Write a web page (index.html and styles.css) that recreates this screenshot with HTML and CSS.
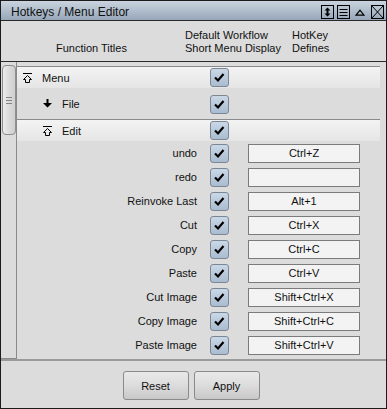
FILE: index.html
```html
<!DOCTYPE html>
<html>
<head>
<meta charset="utf-8">
<link rel="stylesheet" href="styles.css">
</head>
<body>
<div class="window">
  <div class="titlebar">
    <span class="title">Hotkeys / Menu Editor</span>
    <div class="tb-icons">
      <svg class="tb-box" width="13" height="14" viewBox="0 0 13 14"><rect x="0.5" y="0.5" width="12" height="13" fill="none" stroke="#000"/><path d="M6.5 4V10" stroke="#000" stroke-width="2"/><path d="M3.5 5.5L6.5 2.5L9.5 5.5Z M3.5 8.5L6.5 11.5L9.5 8.5Z" fill="#000"/></svg>
      <svg class="tb-box tb-list" width="13" height="14" viewBox="0 0 13 14"><rect x="0.5" y="0.5" width="12" height="13" fill="none" stroke="#000"/><path d="M2.5 4.5H10.5M2.5 7.5H10.5M2.5 10.5H10.5" stroke="#000"/></svg>
      <svg class="tb-tri" width="10" height="7" viewBox="0 0 10 7"><path d="M1 6.2L5 1.2L9 6.2Z" fill="none" stroke="#000" stroke-width="1.3" stroke-linejoin="miter"/></svg>
      <svg class="tb-box" width="13" height="14" viewBox="0 0 13 14"><rect x="0.5" y="0.5" width="12" height="13" fill="none" stroke="#000"/><path d="M1 1L12 13M12 1L1 13" stroke="#000"/></svg>
    </div>
  </div>
  <div class="header">
    <div class="h-func"><span></span><span>Function Titles</span></div>
    <div class="h-def">Default Workflow<br>Short Menu Display</div>
    <div class="h-hot">HotKey<br>Defines</div>
  </div>
  <div class="content">
    <div class="track">
      <div class="thumb"><div class="grip"><i></i><i></i><i></i></div></div>
    </div>
    <div class="list">
      <div class="row group menu">
        <div class="label">
          <svg class="ico" width="10" height="10" viewBox="0 0 10 10"><path d="M0 0.5H9" stroke="#000"/><path d="M4.5 2.5L8.5 6.5H6.5V9.5H2.5V6.5H0.5Z" fill="none" stroke="#000"/></svg>
          <span>Menu</span>
        </div>
        <span class="cb"><svg width="19" height="19" viewBox="0 0 19 19"><path d="M5 9.5L8 12.5L13.5 6" fill="none" stroke="#000" stroke-width="2.2"/></svg></span>
      </div>
      <div class="row file">
        <div class="label sub">
          <svg class="ico" width="10" height="10" viewBox="0 0 10 10"><path d="M3.5 0H5.5V4H9L4.5 8.5L0 4H3.5Z" fill="#000"/></svg>
          <span>File</span>
        </div>
        <span class="cb"><svg width="19" height="19" viewBox="0 0 19 19"><path d="M5 9.5L8 12.5L13.5 6" fill="none" stroke="#000" stroke-width="2.2"/></svg></span>
      </div>
      <div class="row group edit">
        <div class="label sub">
          <svg class="ico" width="10" height="10" viewBox="0 0 10 10"><path d="M0 0.5H9" stroke="#000"/><path d="M4.5 2.5L8.5 6.5H6.5V9.5H2.5V6.5H0.5Z" fill="none" stroke="#000"/></svg>
          <span>Edit</span>
        </div>
        <span class="cb"><svg width="19" height="19" viewBox="0 0 19 19"><path d="M5 9.5L8 12.5L13.5 6" fill="none" stroke="#000" stroke-width="2.2"/></svg></span>
      </div>

      <div class="row item"><div class="label">undo</div><span class="cb"><svg width="19" height="19" viewBox="0 0 19 19"><path d="M5 9.5L8 12.5L13.5 6" fill="none" stroke="#000" stroke-width="2.2"/></svg></span><div class="key">Ctrl+Z</div></div>
      <div class="row item"><div class="label">redo</div><span class="cb"><svg width="19" height="19" viewBox="0 0 19 19"><path d="M5 9.5L8 12.5L13.5 6" fill="none" stroke="#000" stroke-width="2.2"/></svg></span><div class="key"></div></div>
      <div class="row item"><div class="label">Reinvoke Last</div><span class="cb"><svg width="19" height="19" viewBox="0 0 19 19"><path d="M5 9.5L8 12.5L13.5 6" fill="none" stroke="#000" stroke-width="2.2"/></svg></span><div class="key">Alt+1</div></div>
      <div class="row item"><div class="label">Cut</div><span class="cb"><svg width="19" height="19" viewBox="0 0 19 19"><path d="M5 9.5L8 12.5L13.5 6" fill="none" stroke="#000" stroke-width="2.2"/></svg></span><div class="key">Ctrl+X</div></div>
      <div class="row item"><div class="label">Copy</div><span class="cb"><svg width="19" height="19" viewBox="0 0 19 19"><path d="M5 9.5L8 12.5L13.5 6" fill="none" stroke="#000" stroke-width="2.2"/></svg></span><div class="key">Ctrl+C</div></div>
      <div class="row item"><div class="label">Paste</div><span class="cb"><svg width="19" height="19" viewBox="0 0 19 19"><path d="M5 9.5L8 12.5L13.5 6" fill="none" stroke="#000" stroke-width="2.2"/></svg></span><div class="key">Ctrl+V</div></div>
      <div class="row item"><div class="label">Cut Image</div><span class="cb"><svg width="19" height="19" viewBox="0 0 19 19"><path d="M5 9.5L8 12.5L13.5 6" fill="none" stroke="#000" stroke-width="2.2"/></svg></span><div class="key">Shift+Ctrl+X</div></div>
      <div class="row item"><div class="label">Copy Image</div><span class="cb"><svg width="19" height="19" viewBox="0 0 19 19"><path d="M5 9.5L8 12.5L13.5 6" fill="none" stroke="#000" stroke-width="2.2"/></svg></span><div class="key">Shift+Ctrl+C</div></div>
      <div class="row item"><div class="label">Paste Image</div><span class="cb"><svg width="19" height="19" viewBox="0 0 19 19"><path d="M5 9.5L8 12.5L13.5 6" fill="none" stroke="#000" stroke-width="2.2"/></svg></span><div class="key">Shift+Ctrl+V</div></div>
    </div>
  </div>
  <div class="footer">
    <button class="btn">Reset</button>
    <button class="btn">Apply</button>
  </div>
</div>
</body>
</html>
```

FILE: styles.css
```css
* { box-sizing: border-box; }
html, body { margin: 0; padding: 0; background: #dcdcdc; }
body {
  font-family: "Liberation Sans", Arial, sans-serif;
  font-size: 11px;
  color: #111;
}
.window {
  width: 387px;
  height: 409px;
  border: 1px solid #1c1c1c;
  background: #dcdcdc;
  display: flex;
  flex-direction: column;
  overflow: hidden;
}
.titlebar {
  height: 20px;
  flex: none;
  border-bottom: 1px solid #2a2a2a;
  background: linear-gradient(#cad4df, #97a7b9);
  display: flex;
  align-items: center;
  padding-left: 10px;
  padding-right: 2px;
}
.title {
  font-size: 12px;
  color: #111;
  padding-top: 2px;
  flex: 1;
}
.tb-icons {
  display: flex;
  align-items: center;
  padding-top: 3px;
}
.tb-box { display: block; }
.tb-list { margin-left: 3px; }
.tb-tri { display: block; margin: 0 6px 0 5px; }
.header {
  height: 41px;
  flex: none;
  border-bottom: 1px solid #2a2a2a;
  display: flex;
  padding-top: 8px;
  line-height: 13px;
}
.h-func {
  width: 184px;
  padding-left: 55px;
  display: flex;
  flex-direction: column;
}
.h-func span { height: 13px; }
.h-def { width: 107px; }
.content {
  flex: 1;
  display: flex;
  min-height: 0;
}
.track {
  width: 16px;
  flex: none;
  border-right: 1px solid #8a8a8a;
  border-bottom: 1px solid #8a8a8a;
  padding: 3px 0 0 1px;
}
.thumb {
  width: 14px;
  height: 70px;
  border: 1px solid #8e8e8e;
  border-radius: 4px;
  background: linear-gradient(90deg, #ececec, #d8d8d8 60%, #cfcfcf);
  padding: 31px 0 0 3px;
}
.grip i {
  display: block;
  width: 6px;
  height: 1px;
  background: #858585;
  margin-bottom: 2px;
}
.list {
  flex: 1;
  margin-right: 6px;
  padding-top: 4px;
  overflow: hidden;
}
.row {
  display: flex;
  align-items: center;
}
.group {
  border-top: 1px solid #8a8a8a;
  height: 22px;
  background: linear-gradient(#f3f3f3, #e5e5e5);
}
.file { height: 31px; padding-top: 1px; }
.label {
  width: 180px;
  flex: none;
  display: flex;
  align-items: center;
  padding-left: 6px;
}
.label .ico { margin-right: 9px; flex: none; }
.label.sub { padding-left: 26px; }
.item { height: 24px; }
.item .label {
  justify-content: flex-end;
  padding-left: 0;
}
.cb {
  width: 19px;
  height: 19px;
  margin-left: 13px;
  flex: none;
  border: 1px solid #7d8793;
  border-radius: 3px;
  background: linear-gradient(#cad8e6, #a9bcd0);
  position: relative;
}
.cb svg {
  position: absolute;
  left: -1px;
  top: -1px;
}
.key {
  width: 112px;
  height: 19px;
  margin-left: 19px;
  border: 1px solid #7b7b7b;
  background: #f3f3f3;
  text-align: center;
  line-height: 17px;
}
.footer {
  height: 49px;
  flex: none;
  border-top: 2px solid #9a9a9a;
  display: flex;
  justify-content: center;
  align-items: flex-start;
  padding-top: 10px;
  padding-right: 5px;
  gap: 5px;
}
.btn {
  width: 66px;
  height: 29px;
  border: 1px solid #8a8a8a;
  border-radius: 3px;
  background: linear-gradient(#e9e9e9, #dcdcdc 50%, #c8c8c8);
  font-family: "Liberation Sans", Arial, sans-serif;
  font-size: 11px;
  color: #111;
  padding: 0;
}
```
